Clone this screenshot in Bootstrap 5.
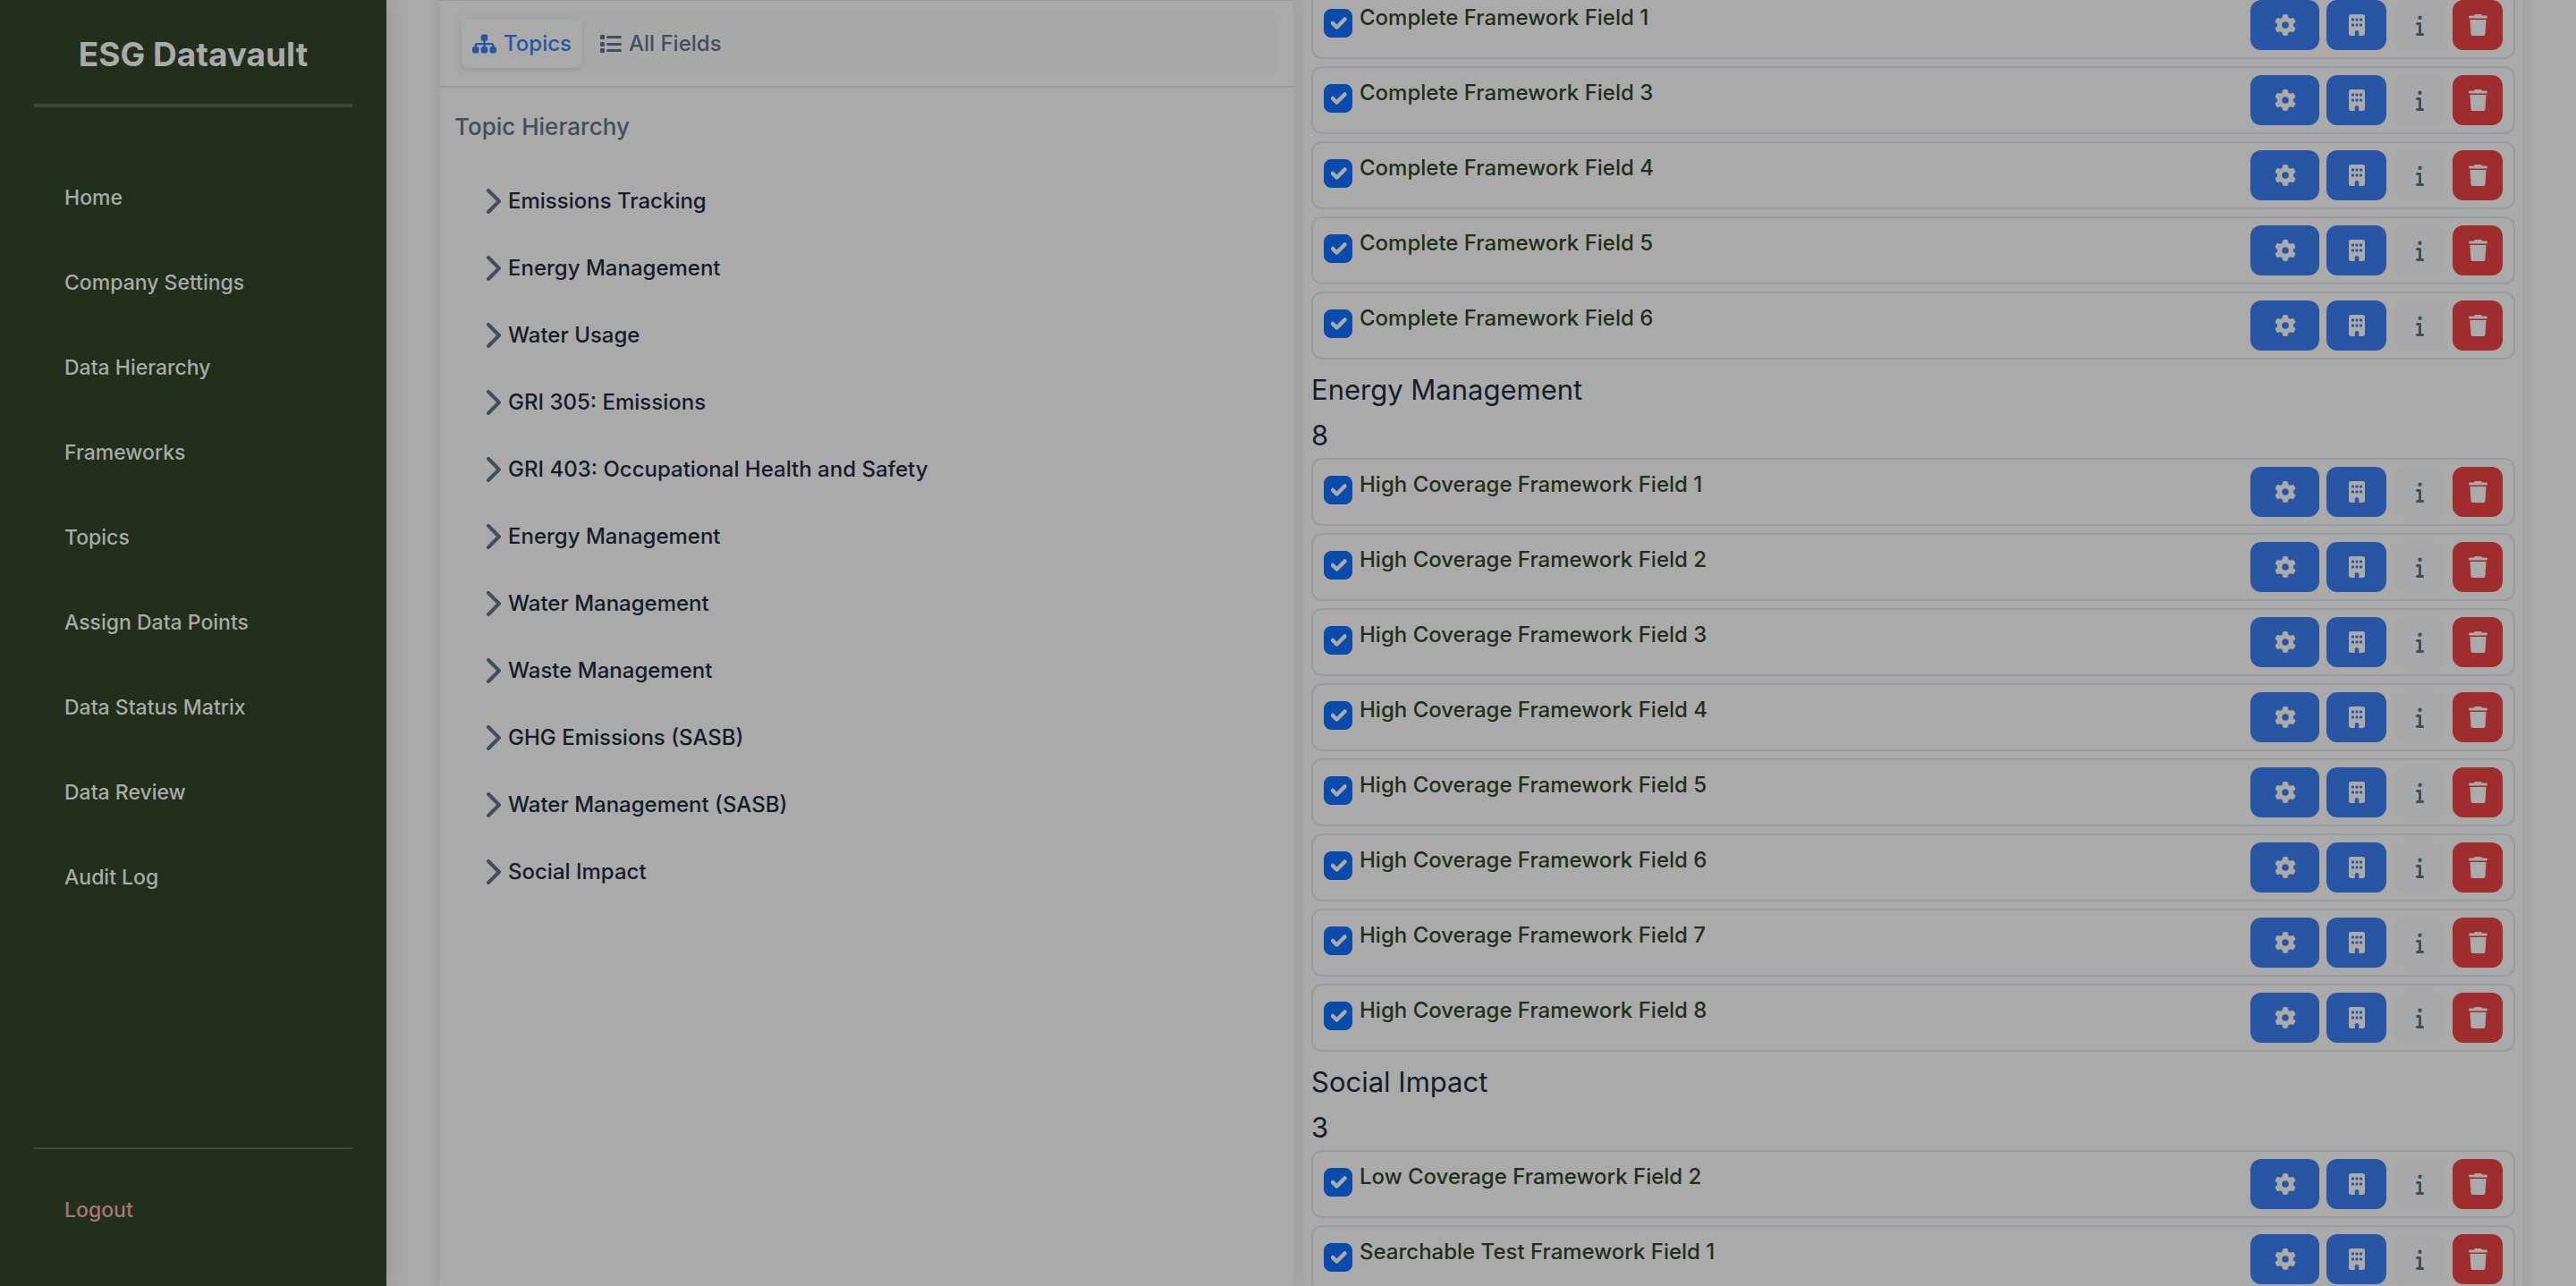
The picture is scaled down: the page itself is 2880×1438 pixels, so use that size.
<!DOCTYPE html>
<html lang="en">
<head>
<meta charset="utf-8">
<meta name="viewport" content="width=device-width, initial-scale=1">
<title>ESG Datavault</title>
<link href="https://cdn.jsdelivr.net/npm/bootstrap@5.3.0/dist/css/bootstrap.min.css" rel="stylesheet">
<style>
:root{--surface:#aaa;--muted-surface:#a6a8a9;--line:#979ba1;--ink:#141d2b;--slate:#434e5d;--blue:#2856a5;--red:#9f2d2d;--forest:#222f1c}
body{font-family:Inter,"Liberation Sans",sans-serif;font-size:24px;line-height:36px;background:var(--surface);color:var(--ink)}
.app-shell{height:100vh;overflow:hidden}
svg{fill:currentColor;flex:none}
.side-panel{width:432px;padding:0 38px;background:var(--forest);box-shadow:4px 0 24px rgba(0,0,0,.12);color:var(--surface);z-index:1}
.side-brand{height:120px;line-height:122px;font-size:37px;font-weight:700;border-bottom:4px solid #3c4a38}
.side-menu{padding-top:53px}
.side-menu a,.side-foot a{color:var(--surface);font-size:23px;font-weight:500;height:95px;padding:0 34px;display:flex;align-items:center;text-decoration:none}
.side-foot{height:155px;border-top:2px solid #3c4a38;padding-top:20px}
.side-foot a.sign-out{color:#a97676}
.work-area{margin:0 48px;padding:0 12px;gap:12px;background:var(--muted-surface)}
.pane{background:var(--surface);box-shadow:0 0 12px rgba(0,0,0,.07)}
.topic-pane{flex:954 1 0;border-top:1px solid var(--line)}
.field-pane{flex:1346 1 0;padding:0 8px}
.tab-strip{padding:12px 17px 12px 16px;border-bottom:2px solid var(--line)}
.tab-group{background:var(--muted-surface);border-radius:12px;padding:8px;height:71px}
.tab-btn{font-size:24px;font-weight:500;line-height:36px;color:var(--slate);padding:0 12px;height:55px;border:0;border-radius:8px}
.tab-btn.active,.tab-btn:hover{color:var(--blue);background:var(--surface);box-shadow:0 2px 6px rgba(0,0,0,.1)}
.pane-title{font-size:26px;font-weight:500;line-height:36px;color:var(--slate);padding:26px 16px 0;margin:0 0 27px}
.topic-btn{display:flex;align-items:center;gap:8px;width:100%;height:75px;padding:0 52px;border:0;background:none;color:var(--ink);font-size:24px;font-weight:500;text-align:left}
.topic-btn svg{color:var(--slate);fill:none;stroke:currentColor;stroke-width:4;stroke-linecap:round;stroke-linejoin:round}
.field-list{margin-top:-10px}
.group-head{font-size:31px;font-weight:400;line-height:51px;margin:0}
.field-row{display:flex;align-items:flex-start;height:76px;margin-bottom:8px;padding:8px 12px;border:2px solid var(--line);border-radius:12px}
.field-row .form-check-input{width:32px;height:32px;margin:10px 8px 0 0;border-radius:8px;flex:none}
.field-row .form-check-input:checked{background-color:#0a4bab;border-color:#0a4bab;background-image:url("data:image/svg+xml,%3csvg xmlns='http://www.w3.org/2000/svg' viewBox='0 0 20 20'%3e%3cpath fill='none' stroke='%23aaaaaa' stroke-linecap='round' stroke-linejoin='round' stroke-width='3' d='m6 10 3 3 6-6'/%3e%3c/svg%3e")}
.field-row label{flex:1;color:#21301b;font-weight:500;line-height:40px}
.act{height:56px;border:0;border-radius:12px;padding:0;display:flex;align-items:center;justify-content:center;margin-left:8px;color:var(--surface)}
.act-set{width:77px;background:var(--blue)}
.act-org{width:67px;background:var(--blue)}
.act-info{width:58px;background:var(--muted-surface);color:var(--slate)}
.act-del{width:56px;background:var(--red)}
</style>
<script src="https://cdn.jsdelivr.net/npm/bootstrap@5.3.0/dist/js/bootstrap.bundle.min.js"></script>
</head>
<body>
<svg class="d-none" aria-hidden="true">
<symbol id="gear" viewBox="0 0 512 512"><path d="M495.9 166.6c3.2 8.7 .5 18.4-6.4 24.6l-43.3 39.4c1.1 8.3 1.7 16.8 1.7 25.4s-.6 17.1-1.7 25.4l43.3 39.4c6.9 6.2 9.6 15.9 6.4 24.6c-4.4 11.9-9.7 23.3-15.8 34.3l-4.7 8.1c-6.6 11-14 21.4-22.1 31.2c-5.9 7.2-15.7 9.6-24.5 6.8l-55.7-17.7c-13.4 10.3-28.2 18.9-44 25.4l-12.5 57.1c-2 9.1-9 16.3-18.2 17.8c-13.8 2.3-28 3.5-42.5 3.5s-28.7-1.2-42.5-3.5c-9.2-1.5-16.2-8.7-18.2-17.8l-12.5-57.1c-15.8-6.5-30.6-15.1-44-25.4L83.1 425.9c-8.8 2.8-18.6 .3-24.5-6.8c-8.1-9.8-15.5-20.2-22.1-31.2l-4.7-8.1c-6.1-11-11.4-22.4-15.8-34.3c-3.2-8.7-.5-18.4 6.4-24.6l43.3-39.4C64.6 273.1 64 264.6 64 256s.6-17.1 1.7-25.4L22.4 191.2c-6.9-6.2-9.6-15.9-6.4-24.6c4.4-11.9 9.7-23.3 15.8-34.3l4.7-8.1c6.6-11 14-21.4 22.1-31.2c5.9-7.2 15.7-9.6 24.5-6.8l55.7 17.7c13.4-10.3 28.2-18.9 44-25.4l12.5-57.1c2-9.1 9-16.3 18.2-17.8C227.3 1.2 241.5 0 256 0s28.7 1.2 42.5 3.5c9.2 1.5 16.2 8.7 18.2 17.8l12.5 57.1c15.8 6.5 30.6 15.1 44 25.4l55.7-17.7c8.8-2.8 18.6-.3 24.5 6.8c8.1 9.8 15.5 20.2 22.1 31.2l4.7 8.1c6.1 11 11.4 22.4 15.8 34.3zM256 336a80 80 0 1 0 0-160 80 80 0 1 0 0 160z"/></symbol>
<symbol id="building" viewBox="0 0 384 512"><path fill-rule="evenodd" d="M48 0C21.5 0 0 21.5 0 48V464c0 26.5 21.5 48 48 48h96V432c0-26.5 21.5-48 48-48s48 21.5 48 48v80h96c26.5 0 48-21.5 48-48V48c0-26.5-21.5-48-48-48H48zM80 96h32q16 0 16 16v32q0 16-16 16H80q-16 0-16-16v-32q0-16 16-16zM176 96h32q16 0 16 16v32q0 16-16 16h-32q-16 0-16-16v-32q0-16 16-16zM272 96h32q16 0 16 16v32q0 16-16 16h-32q-16 0-16-16v-32q0-16 16-16zM80 224h32q16 0 16 16v32q0 16-16 16H80q-16 0-16-16v-32q0-16 16-16zM176 224h32q16 0 16 16v32q0 16-16 16h-32q-16 0-16-16v-32q0-16 16-16zM272 224h32q16 0 16 16v32q0 16-16 16h-32q-16 0-16-16v-32q0-16 16-16z"/></symbol>
<symbol id="info" viewBox="0 0 192 512"><path d="M48 80a48 48 0 1 1 96 0A48 48 0 1 1 48 80zM0 224c0-17.7 14.3-32 32-32H96c17.7 0 32 14.3 32 32V448h32c17.7 0 32 14.3 32 32s-14.3 32-32 32H32c-17.7 0-32-14.3-32-32s14.3-32 32-32H64V256H32c-17.7 0-32-14.3-32-32z"/></symbol>
<symbol id="trash" viewBox="0 0 448 512"><path d="M135.2 17.7L128 32H32C14.3 32 0 46.3 0 64S14.3 96 32 96H416c17.7 0 32-14.3 32-32s-14.3-32-32-32H320l-7.2-14.3C307.4 6.8 296.3 0 284.2 0H163.8c-12.1 0-23.2 6.8-28.6 17.7zM416 128H32L53.2 467c1.6 25.3 22.6 45 47.9 45H346.9c25.3 0 46.3-19.7 47.9-45L416 128z"/></symbol>
<symbol id="chev" viewBox="0 0 16 28"><path d="M2 2L14 14L2 26"/></symbol>
</svg>
<div class="app-shell d-flex">
<aside class="side-panel d-flex flex-column flex-shrink-0">
<div class="side-brand text-center">ESG Datavault</div>
<nav class="side-menu flex-grow-1" aria-label="Main">
<a href="#">Home</a>
<a href="#">Company Settings</a>
<a href="#">Data Hierarchy</a>
<a href="#">Frameworks</a>
<a href="#">Topics</a>
<a href="#">Assign Data Points</a>
<a href="#">Data Status Matrix</a>
<a href="#">Data Review</a>
<a href="#">Audit Log</a>
</nav>
<div class="side-foot"><a class="sign-out" href="#">Logout</a></div>
</aside>
<main class="work-area d-flex flex-grow-1">
<section class="pane topic-pane">
<div class="tab-strip"><div class="tab-group d-flex gap-2">
<button type="button" class="btn tab-btn active d-flex align-items-center gap-2"><svg width="27" height="24" viewBox="0 0 576 512"><path d="M208 80c0-26.5 21.5-48 48-48h64c26.5 0 48 21.5 48 48v64c0 26.5-21.5 48-48 48h-8v40H464c30.9 0 56 25.1 56 56v32h8c26.5 0 48 21.5 48 48v64c0 26.5-21.5 48-48 48H464c-26.5 0-48-21.5-48-48V368c0-26.5 21.5-48 48-48h8V288c0-4.4-3.6-8-8-8H312v40h8c26.5 0 48 21.5 48 48v64c0 26.5-21.5 48-48 48H256c-26.5 0-48-21.5-48-48V368c0-26.5 21.5-48 48-48h8V280H112c-4.4 0-8 3.6-8 8v32h8c26.5 0 48 21.5 48 48v64c0 26.5-21.5 48-48 48H48c-26.5 0-48-21.5-48-48V368c0-26.5 21.5-48 48-48h8V288c0-30.9 25.1-56 56-56H264V192h-8c-26.5 0-48-21.5-48-48V80z"/></svg>Topics</button>
<button type="button" class="btn tab-btn d-flex align-items-center gap-2"><svg width="24" height="24" viewBox="0 0 24 24"><rect x="0" y="2" width="5" height="5" rx="1"/><rect x="0" y="10" width="5" height="5" rx="1"/><rect x="0" y="17" width="5" height="5" rx="1"/><rect x="7" y="3" width="17" height="3" rx="1.5"/><rect x="7" y="11" width="17" height="3" rx="1.5"/><rect x="7" y="18" width="17" height="3" rx="1.5"/></svg>All Fields</button>
</div></div>
<h2 class="pane-title">Topic Hierarchy</h2>
<button type="button" class="topic-btn"><svg width="16" height="28"><use href="#chev"/></svg>Emissions Tracking</button>
<button type="button" class="topic-btn"><svg width="16" height="28"><use href="#chev"/></svg>Energy Management</button>
<button type="button" class="topic-btn"><svg width="16" height="28"><use href="#chev"/></svg>Water Usage</button>
<button type="button" class="topic-btn"><svg width="16" height="28"><use href="#chev"/></svg>GRI 305: Emissions</button>
<button type="button" class="topic-btn"><svg width="16" height="28"><use href="#chev"/></svg>GRI 403: Occupational Health and Safety</button>
<button type="button" class="topic-btn"><svg width="16" height="28"><use href="#chev"/></svg>Energy Management</button>
<button type="button" class="topic-btn"><svg width="16" height="28"><use href="#chev"/></svg>Water Management</button>
<button type="button" class="topic-btn"><svg width="16" height="28"><use href="#chev"/></svg>Waste Management</button>
<button type="button" class="topic-btn"><svg width="16" height="28"><use href="#chev"/></svg>GHG Emissions (SASB)</button>
<button type="button" class="topic-btn"><svg width="16" height="28"><use href="#chev"/></svg>Water Management (SASB)</button>
<button type="button" class="topic-btn"><svg width="16" height="28"><use href="#chev"/></svg>Social Impact</button>
</section>
<section class="pane field-pane">
<div class="field-list">
<div class="field-row"><input class="form-check-input" type="checkbox" id="c1" checked><label for="c1">Complete Framework Field 1</label><button type="button" class="act act-set" aria-label="Configure"><svg width="24" height="24"><use href="#gear"/></svg></button><button type="button" class="act act-org" aria-label="Assign"><svg width="18" height="24"><use href="#building"/></svg></button><button type="button" class="act act-info" aria-label="Info"><svg width="9" height="24"><use href="#info"/></svg></button><button type="button" class="act act-del" aria-label="Remove"><svg width="21" height="24"><use href="#trash"/></svg></button></div>
<div class="field-row"><input class="form-check-input" type="checkbox" id="c3" checked><label for="c3">Complete Framework Field 3</label><button type="button" class="act act-set" aria-label="Configure"><svg width="24" height="24"><use href="#gear"/></svg></button><button type="button" class="act act-org" aria-label="Assign"><svg width="18" height="24"><use href="#building"/></svg></button><button type="button" class="act act-info" aria-label="Info"><svg width="9" height="24"><use href="#info"/></svg></button><button type="button" class="act act-del" aria-label="Remove"><svg width="21" height="24"><use href="#trash"/></svg></button></div>
<div class="field-row"><input class="form-check-input" type="checkbox" id="c4" checked><label for="c4">Complete Framework Field 4</label><button type="button" class="act act-set" aria-label="Configure"><svg width="24" height="24"><use href="#gear"/></svg></button><button type="button" class="act act-org" aria-label="Assign"><svg width="18" height="24"><use href="#building"/></svg></button><button type="button" class="act act-info" aria-label="Info"><svg width="9" height="24"><use href="#info"/></svg></button><button type="button" class="act act-del" aria-label="Remove"><svg width="21" height="24"><use href="#trash"/></svg></button></div>
<div class="field-row"><input class="form-check-input" type="checkbox" id="c5" checked><label for="c5">Complete Framework Field 5</label><button type="button" class="act act-set" aria-label="Configure"><svg width="24" height="24"><use href="#gear"/></svg></button><button type="button" class="act act-org" aria-label="Assign"><svg width="18" height="24"><use href="#building"/></svg></button><button type="button" class="act act-info" aria-label="Info"><svg width="9" height="24"><use href="#info"/></svg></button><button type="button" class="act act-del" aria-label="Remove"><svg width="21" height="24"><use href="#trash"/></svg></button></div>
<div class="field-row"><input class="form-check-input" type="checkbox" id="c6" checked><label for="c6">Complete Framework Field 6</label><button type="button" class="act act-set" aria-label="Configure"><svg width="24" height="24"><use href="#gear"/></svg></button><button type="button" class="act act-org" aria-label="Assign"><svg width="18" height="24"><use href="#building"/></svg></button><button type="button" class="act act-info" aria-label="Info"><svg width="9" height="24"><use href="#info"/></svg></button><button type="button" class="act act-del" aria-label="Remove"><svg width="21" height="24"><use href="#trash"/></svg></button></div>
<h3 class="group-head">Energy Management</h3>
<div class="group-head">8</div>
<div class="field-row"><input class="form-check-input" type="checkbox" id="h1" checked><label for="h1">High Coverage Framework Field 1</label><button type="button" class="act act-set" aria-label="Configure"><svg width="24" height="24"><use href="#gear"/></svg></button><button type="button" class="act act-org" aria-label="Assign"><svg width="18" height="24"><use href="#building"/></svg></button><button type="button" class="act act-info" aria-label="Info"><svg width="9" height="24"><use href="#info"/></svg></button><button type="button" class="act act-del" aria-label="Remove"><svg width="21" height="24"><use href="#trash"/></svg></button></div>
<div class="field-row"><input class="form-check-input" type="checkbox" id="h2" checked><label for="h2">High Coverage Framework Field 2</label><button type="button" class="act act-set" aria-label="Configure"><svg width="24" height="24"><use href="#gear"/></svg></button><button type="button" class="act act-org" aria-label="Assign"><svg width="18" height="24"><use href="#building"/></svg></button><button type="button" class="act act-info" aria-label="Info"><svg width="9" height="24"><use href="#info"/></svg></button><button type="button" class="act act-del" aria-label="Remove"><svg width="21" height="24"><use href="#trash"/></svg></button></div>
<div class="field-row"><input class="form-check-input" type="checkbox" id="h3" checked><label for="h3">High Coverage Framework Field 3</label><button type="button" class="act act-set" aria-label="Configure"><svg width="24" height="24"><use href="#gear"/></svg></button><button type="button" class="act act-org" aria-label="Assign"><svg width="18" height="24"><use href="#building"/></svg></button><button type="button" class="act act-info" aria-label="Info"><svg width="9" height="24"><use href="#info"/></svg></button><button type="button" class="act act-del" aria-label="Remove"><svg width="21" height="24"><use href="#trash"/></svg></button></div>
<div class="field-row"><input class="form-check-input" type="checkbox" id="h4" checked><label for="h4">High Coverage Framework Field 4</label><button type="button" class="act act-set" aria-label="Configure"><svg width="24" height="24"><use href="#gear"/></svg></button><button type="button" class="act act-org" aria-label="Assign"><svg width="18" height="24"><use href="#building"/></svg></button><button type="button" class="act act-info" aria-label="Info"><svg width="9" height="24"><use href="#info"/></svg></button><button type="button" class="act act-del" aria-label="Remove"><svg width="21" height="24"><use href="#trash"/></svg></button></div>
<div class="field-row"><input class="form-check-input" type="checkbox" id="h5" checked><label for="h5">High Coverage Framework Field 5</label><button type="button" class="act act-set" aria-label="Configure"><svg width="24" height="24"><use href="#gear"/></svg></button><button type="button" class="act act-org" aria-label="Assign"><svg width="18" height="24"><use href="#building"/></svg></button><button type="button" class="act act-info" aria-label="Info"><svg width="9" height="24"><use href="#info"/></svg></button><button type="button" class="act act-del" aria-label="Remove"><svg width="21" height="24"><use href="#trash"/></svg></button></div>
<div class="field-row"><input class="form-check-input" type="checkbox" id="h6" checked><label for="h6">High Coverage Framework Field 6</label><button type="button" class="act act-set" aria-label="Configure"><svg width="24" height="24"><use href="#gear"/></svg></button><button type="button" class="act act-org" aria-label="Assign"><svg width="18" height="24"><use href="#building"/></svg></button><button type="button" class="act act-info" aria-label="Info"><svg width="9" height="24"><use href="#info"/></svg></button><button type="button" class="act act-del" aria-label="Remove"><svg width="21" height="24"><use href="#trash"/></svg></button></div>
<div class="field-row"><input class="form-check-input" type="checkbox" id="h7" checked><label for="h7">High Coverage Framework Field 7</label><button type="button" class="act act-set" aria-label="Configure"><svg width="24" height="24"><use href="#gear"/></svg></button><button type="button" class="act act-org" aria-label="Assign"><svg width="18" height="24"><use href="#building"/></svg></button><button type="button" class="act act-info" aria-label="Info"><svg width="9" height="24"><use href="#info"/></svg></button><button type="button" class="act act-del" aria-label="Remove"><svg width="21" height="24"><use href="#trash"/></svg></button></div>
<div class="field-row"><input class="form-check-input" type="checkbox" id="h8" checked><label for="h8">High Coverage Framework Field 8</label><button type="button" class="act act-set" aria-label="Configure"><svg width="24" height="24"><use href="#gear"/></svg></button><button type="button" class="act act-org" aria-label="Assign"><svg width="18" height="24"><use href="#building"/></svg></button><button type="button" class="act act-info" aria-label="Info"><svg width="9" height="24"><use href="#info"/></svg></button><button type="button" class="act act-del" aria-label="Remove"><svg width="21" height="24"><use href="#trash"/></svg></button></div>
<h3 class="group-head">Social Impact</h3>
<div class="group-head">3</div>
<div class="field-row"><input class="form-check-input" type="checkbox" id="s1" checked><label for="s1">Low Coverage Framework Field 2</label><button type="button" class="act act-set" aria-label="Configure"><svg width="24" height="24"><use href="#gear"/></svg></button><button type="button" class="act act-org" aria-label="Assign"><svg width="18" height="24"><use href="#building"/></svg></button><button type="button" class="act act-info" aria-label="Info"><svg width="9" height="24"><use href="#info"/></svg></button><button type="button" class="act act-del" aria-label="Remove"><svg width="21" height="24"><use href="#trash"/></svg></button></div>
<div class="field-row"><input class="form-check-input" type="checkbox" id="s2" checked><label for="s2">Searchable Test Framework Field 1</label><button type="button" class="act act-set" aria-label="Configure"><svg width="24" height="24"><use href="#gear"/></svg></button><button type="button" class="act act-org" aria-label="Assign"><svg width="18" height="24"><use href="#building"/></svg></button><button type="button" class="act act-info" aria-label="Info"><svg width="9" height="24"><use href="#info"/></svg></button><button type="button" class="act act-del" aria-label="Remove"><svg width="21" height="24"><use href="#trash"/></svg></button></div>
</div>
</section>
</main>
</div>
</body>
</html>
